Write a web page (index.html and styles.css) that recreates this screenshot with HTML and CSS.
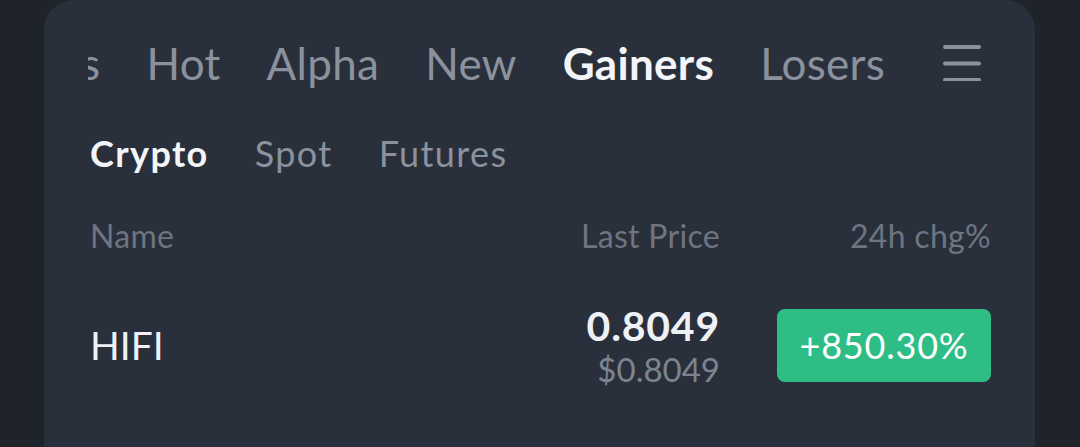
FILE: index.html
```html
<!DOCTYPE html>
<html lang="en">
<head>
    <meta charset="utf-8" />
    <title>Gainers</title>
    <link rel="stylesheet" href="styles.css">
</head>
<body>
<div class="card">
    <!--top tabs-->
    <div class="top-nav">
        <div class="nav-box">
            <ul class="nav-list">
                <li>Favorites</li>
                <li>Hot</li>
                <li>Alpha</li>
                <li>New</li>
                <li class="active">Gainers</li>
                <li>Losers</li>
            </ul>
        </div>
        <a href="javascript:void(0);" class="menu-btn">
            <svg width="38" height="38" viewBox="0 0 38 38">
                <path d="M2 4H36M2 20.5H36M2 37H36" stroke="#8b929e" stroke-width="4" stroke-linecap="round" fill="none"/>
            </svg>
        </a>
    </div>

    <!--sub tabs-->
    <ul class="sub-tabs">
        <li class="active">Crypto</li>
        <li>Spot</li>
        <li>Futures</li>
    </ul>

    <!--table-->
    <div class="row head">
        <div class="col-name">Name</div>
        <div class="col-price">Last Price</div>
        <div class="col-chg">24h chg%</div>
    </div>
    <div class="row item">
        <div class="col-name">HIFI</div>
        <div class="col-price">
            <div class="price">0.8049</div>
            <div class="fiat">$0.8049</div>
        </div>
        <div class="col-chg"><span class="badge up">+850.30%</span></div>
    </div>
</div>
</body>
</html>
```

FILE: styles.css
```css
html,body{margin:0;padding:0;}
body{
    background:#1f242b;
    height:447px;
    overflow:hidden;
    font-family:"Lato","Noto Sans",sans-serif;
}
ul{margin:0;padding:0;list-style:none;}

.card{
    margin-left:44px;
    width:991px;
    height:447px;
    box-sizing:border-box;
    padding:0 44px 0 46px;
    background:#29303b;
    border-radius:30px 30px 0 0;
}

/*top nav*/
.top-nav{
    display:flex;
    align-items:center;
    height:126px;
    margin-left:-2px;
}
.nav-box{
    flex:1;
    overflow:hidden;
}
.nav-list{
    display:flex;
    gap:46px;
    margin-left:-165px;
    white-space:nowrap;
}
.nav-list li{
    font-size:44px;
    letter-spacing:0.3px;
    color:#8b929e;
}
.nav-list li.active{
    color:#f3f5f8;
    font-weight:700;
}
.menu-btn{
    display:block;
    width:38px;
    height:41px;
    margin:0 10px 0 0;
}

/*sub tabs*/
.sub-tabs{
    display:flex;
    gap:46px;
    height:54px;
    align-items:center;
}
.sub-tabs li{
    font-size:36px;
    letter-spacing:1.4px;
    color:#8b929e;
}
.sub-tabs li.active{
    color:#f3f5f8;
    font-weight:700;
}

/*table*/
.row{
    display:grid;
    grid-template-columns:1fr auto 214px;
    column-gap:57px;
    align-items:center;
    height:110px;
}
.head{
    font-size:32px;
    letter-spacing:0.3px;
    color:#6e7581;
}
.col-price,.col-chg{text-align:right;}
.item .col-name{
    font-size:39px;
    color:#eef1f6;
}
.price{
    font-size:41px;
    font-weight:700;
    letter-spacing:0.8px;
    color:#eef1f6;
    line-height:47px;
}
.fiat{
    font-size:33px;
    color:#7d8491;
    line-height:40px;
}
.badge{
    display:flex;
    align-items:center;
    justify-content:center;
    height:73px;
    border-radius:8px;
    font-size:36px;
    letter-spacing:0.8px;
    color:#fff;
}
.badge.up{background:#2ebd85;}
```
